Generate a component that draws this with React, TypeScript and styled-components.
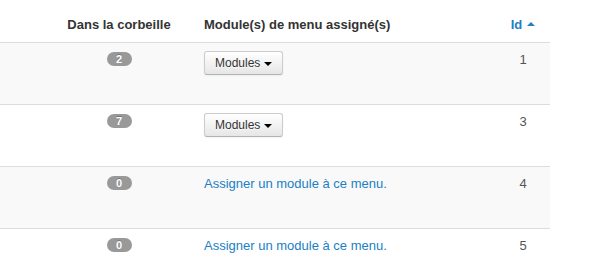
import React from "react";
import styled, { createGlobalStyle } from "styled-components";

const Global = createGlobalStyle`
  html, body { margin: 0; padding: 0; background: #fff; }
  body {
    padding-top: 8px;
    font-family: "Liberation Sans", Arial, sans-serif;
    font-size: 13px;
    line-height: 18px;
    color: #333;
  }
`;

const Table = styled.table`
  width: 550px;
  border-collapse: collapse;
  border-spacing: 0;
  table-layout: fixed;
`;

const Th = styled.th<{ $align?: string }>`
  padding: 8px;
  height: 18px;
  font-weight: bold;
  text-align: ${(p) => p.$align || "left"};
  vertical-align: bottom;
  color: #333;
  white-space: nowrap;
`;

const Row = styled.tr<{ $striped?: boolean }>`
  background: ${(p) => (p.$striped ? "#f9f9f9" : "#fff")};
`;

const Td = styled.td<{ $align?: string }>`
  padding: 8px;
  height: 45px;
  border-top: 1px solid #ddd;
  text-align: ${(p) => p.$align || "left"};
  vertical-align: top;
  color: #555;
`;

const Badge = styled.span`
  display: inline-block;
  margin-top: 1px;
  width: 25px;
  height: 14px;
  line-height: 14px;
  border-radius: 7px;
  background: #999;
  color: #fff;
  font-size: 11px;
  font-weight: bold;
  text-align: center;
  vertical-align: top;
  text-shadow: 0 -1px 0 rgba(0, 0, 0, 0.25);
`;

const Button = styled.button`
  display: inline-flex;
  align-items: center;
  box-sizing: border-box;
  height: 24px;
  padding: 2px 10px;
  font-family: "Liberation Sans", Arial, sans-serif;
  font-size: 12px;
  line-height: 18px;
  color: #333;
  text-shadow: 0 1px 1px rgba(255, 255, 255, 0.75);
  background: linear-gradient(to bottom, #fff, #e6e6e6);
  border: 1px solid #ccc;
  border-bottom-color: #b3b3b3;
  border-radius: 3px;
  box-shadow: inset 0 1px 0 rgba(255, 255, 255, 0.2), 0 1px 2px rgba(0, 0, 0, 0.05);
  cursor: pointer;
`;

const Caret = styled.span<{ $up?: boolean }>`
  display: inline-block;
  width: 0;
  height: 0;
  margin-left: 4px;
  border-left: 4px solid transparent;
  border-right: 4px solid transparent;
  ${(p) =>
    p.$up
      ? "border-bottom: 4px solid currentColor; margin-bottom: 2px;"
      : "border-top: 4px solid #000; margin-top: 1px;"}
`;

const Link = styled.a`
  color: #2080c4;
  text-decoration: none;
`;

const SortLink = styled(Link)`
  display: inline-flex;
  align-items: center;
  gap: 1px;
`;

const rows = [
  { count: 2, modules: true, id: 1 },
  { count: 7, modules: true, id: 3 },
  { count: 0, modules: false, id: 4 },
  { count: 0, modules: false, id: 5 },
];

export default function App() {
  return (
    <>
      <Global />
      <Table>
        <colgroup>
          <col style={{ width: 42 }} />
          <col style={{ width: 154 }} />
          <col style={{ width: 300 }} />
          <col style={{ width: 54 }} />
        </colgroup>
        <thead>
          <tr>
            <Th />
            <Th $align="center">Dans la corbeille</Th>
            <Th>Module(s) de menu assigné(s)</Th>
            <Th $align="center">
              <SortLink href="#">
                Id <Caret $up />
              </SortLink>
            </Th>
          </tr>
        </thead>
        <tbody>
          {rows.map((r, i) => (
            <Row key={r.id} $striped={i % 2 === 0}>
              <Td />
              <Td $align="center">
                <Badge>{r.count}</Badge>
              </Td>
              <Td>
                {r.modules ? (
                  <Button type="button">
                    Modules <Caret />
                  </Button>
                ) : (
                  <Link href="#">Assigner un module à ce menu.</Link>
                )}
              </Td>
              <Td $align="center">{r.id}</Td>
            </Row>
          ))}
        </tbody>
      </Table>
    </>
  );
}
